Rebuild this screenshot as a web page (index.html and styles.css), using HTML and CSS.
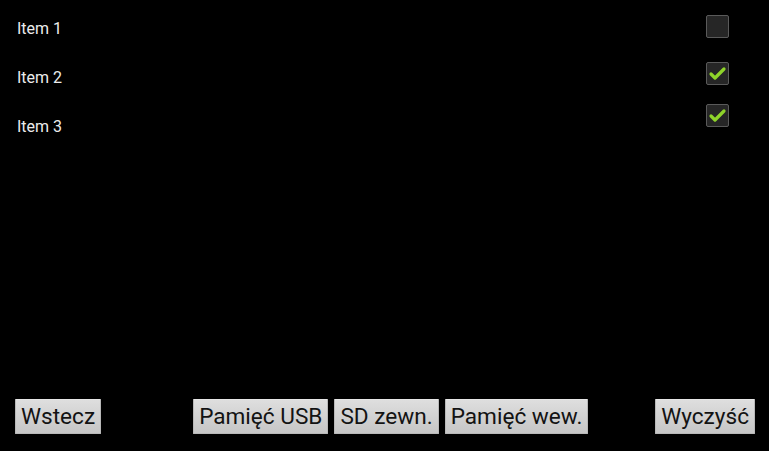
FILE: index.html
```html
<!DOCTYPE html>
<html>
<head>
<meta charset="utf-8">
<link rel="stylesheet" href="styles.css">
</head>
<body>
<div class="screen">
  <ul class="list">
    <li class="row"><span class="label">Item 1</span><span class="check"></span></li>
    <li class="row"><span class="label">Item 2</span><span class="check on"><svg viewBox="0 0 23 23" width="23" height="23"><polyline points="5,12 9,16 18,7" fill="none" stroke="#8fd42a" stroke-width="3.2" stroke-linecap="round" stroke-linejoin="round"/></svg></span></li>
    <li class="row"><span class="label">Item 3</span><span class="check on raised"><svg viewBox="0 0 23 23" width="23" height="23"><polyline points="5,12 9,16 18,7" fill="none" stroke="#8fd42a" stroke-width="3.2" stroke-linecap="round" stroke-linejoin="round"/></svg></span></li>
  </ul>
  <div class="bar">
    <button class="btn">Wstecz</button>
    <div class="group">
      <button class="btn">Pamięć USB</button>
      <button class="btn">SD zewn.</button>
      <button class="btn">Pamięć wew.</button>
    </div>
    <button class="btn last">Wyczyść</button>
  </div>
</div>
</body>
</html>
```

FILE: styles.css
```css
html, body {
  margin: 0;
  padding: 0;
  background: #000;
}
.screen {
  width: 769px;
  height: 451px;
  display: flex;
  flex-direction: column;
  font-family: Roboto, "Liberation Sans", sans-serif;
}
.list {
  list-style: none;
  margin: 0;
  padding: 4px 0 0 0;
  flex: 1;
}
.row {
  height: 49px;
  display: flex;
  align-items: center;
  padding: 0 40px 0 17px;
}
.label {
  flex: 1;
  color: #ececec;
  font-size: 16px;
}
.check {
  width: 21px;
  height: 21px;
  border: 1px solid #5a5a5a;
  border-radius: 2px;
  background: #262626;
  box-sizing: content-box;
  position: relative;
  top: -2px;
  display: block;
}
.check.on {
  top: -4px;
}
.check.raised {
  top: -11px;
}
.check svg {
  display: block;
  margin: -1px;
}
.bar {
  display: flex;
  align-items: flex-start;
  padding: 0 14px 17px 15px;
}
.group {
  display: flex;
  gap: 6px;
  margin-left: 92px;
}
.btn {
  font-family: Roboto, "Liberation Sans", sans-serif;
  font-size: 22.6px;
  color: #131313;
  height: 35px;
  padding: 0 5px;
  margin: 0;
  border: 1px solid #b8b8b8;
  border-top-color: #e6e6e6;
  border-radius: 1px;
  background: linear-gradient(#dedede, #c6c6c6);
  line-height: 33px;
}
.last {
  margin-left: auto;
}
```
